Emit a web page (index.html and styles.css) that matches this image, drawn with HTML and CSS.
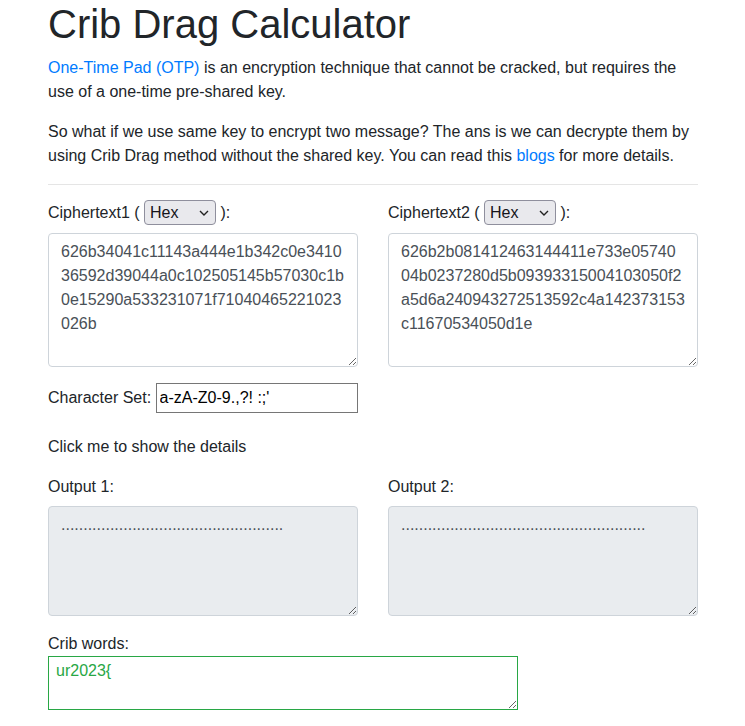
FILE: index.html
```html
<!DOCTYPE html>
<html lang="en">
<head>
<meta charset="utf-8">
<title>Crib Drag Calculator</title>
<link rel="stylesheet" href="styles.css">
</head>
<body>
<div class="container">
  <h1 class="title">Crib Drag Calculator</h1>
  <p class="lead-text"><a href="#">One-Time Pad (OTP)</a> is an encryption technique that cannot be cracked, but requires the use of a one-time pre-shared key.</p>
  <p class="lead-text">So what if we use same key to encrypt two message? The ans is we can decrypte them by using Crib Drag method without the shared key. You can read this <a href="#">blogs</a> for more details.</p>
  <hr class="divider">
  <div class="row">
    <div class="col">
      <label class="field-label">Ciphertext1 ( <span class="select-wrap"><select class="fmt-select"><option>Hex</option></select><svg class="chev" width="10" height="6" viewBox="0 0 10 6"><path d="M1 1 L5 5 L9 1" fill="none" stroke="#222" stroke-width="1.4"/></svg></span> ):</label>
      <textarea class="form-control" rows="5">626b34041c11143a444e1b342c0e3410
36592d39044a0c102505145b57030c1b
0e15290a533231071f71040465221023
026b</textarea>
    </div>
    <div class="col">
      <label class="field-label">Ciphertext2 ( <span class="select-wrap"><select class="fmt-select"><option>Hex</option></select><svg class="chev" width="10" height="6" viewBox="0 0 10 6"><path d="M1 1 L5 5 L9 1" fill="none" stroke="#222" stroke-width="1.4"/></svg></span> ):</label>
      <textarea class="form-control" rows="5">626b2b081412463144411e733e05740
04b0237280d5b09393315004103050f2
a5d6a240943272513592c4a142373153
c11670534050d1e</textarea>
    </div>
  </div>
  <div class="charset-row">
    <label class="charset-label">Character Set: <input class="charset-input" type="text" value="a-zA-Z0-9.,?! :;'"></label>
  </div>
  <p class="details-toggle">Click me to show the details</p>
  <div class="row">
    <div class="col">
      <label class="field-label output-label">Output 1:</label>
      <textarea class="form-control output" rows="4" readonly>..................................................</textarea>
    </div>
    <div class="col">
      <label class="field-label output-label">Output 2:</label>
      <textarea class="form-control output" rows="4" readonly>.......................................................</textarea>
    </div>
  </div>
  <div class="crib-group">
    <label class="crib-label">Crib words:</label>
    <textarea class="crib-input" rows="2">ur2023{</textarea>
  </div>
</div>
</body>
</html>
```
FILE: styles.css
```css
* { box-sizing: border-box; }
html, body {
  margin: 0;
  padding: 0;
  background: #fff;
}
body {
  font-family: "Liberation Sans", Arial, sans-serif;
  font-size: 16px;
  line-height: 1.5;
  color: #212529;
}
.container {
  width: 650px;
  margin-left: 48px;
}
.title {
  margin: 0 0 8px 0;
  font-size: 40px;
  font-weight: 500;
  line-height: 1.2;
}
.lead-text {
  margin: 0 0 16px 0;
}
a {
  color: #007bff;
  text-decoration: none;
}
.divider {
  margin: 15px 0 16px 0;
  border: 0;
  border-top: 1px solid rgba(0,0,0,.1);
}
.row {
  display: flex;
  gap: 30px;
  margin-bottom: 16px;
}
.col {
  flex: 1 1 0;
  display: flex;
  flex-direction: column;
}
.field-label {
  display: block;
  margin-bottom: 8px;
  line-height: 24px;
  height: 24px;
}
.output-label {
  margin-bottom: 7px;
}
.select-wrap {
  position: relative;
  display: inline-block;
  vertical-align: middle;
  margin-top: -3px;
}
.fmt-select {
  appearance: none;
  -webkit-appearance: none;
  display: block;
  width: 72px;
  height: 25px;
  padding: 0 0 0 5px;
  font-family: "Liberation Sans", Arial, sans-serif;
  font-size: 16px;
  color: #15141a;
  background: #e9e9ed;
  border: 1px solid #8f8f9d;
  border-radius: 4px;
  margin: 0;
}
.chev {
  position: absolute;
  right: 7px;
  top: 10px;
  pointer-events: none;
}
.form-control {
  display: block;
  width: 100%;
  padding: 6px 12px;
  font-family: "Liberation Sans", Arial, sans-serif;
  font-size: 16px;
  line-height: 24px;
  color: #495057;
  background: #fff;
  border: 1px solid #ced4da;
  border-radius: 4px;
  resize: vertical;
  margin: 0;
  overflow: hidden;
  white-space: pre-wrap;
  word-break: break-all;
}
.form-control.output {
  background: #e9ecef;
}
.charset-row {
  margin-bottom: 16px;
  height: 36px;
}
.charset-label {
  line-height: 30px;
}
.charset-input {
  width: 202px;
  height: 30px;
  padding: 1px 3px;
  font-family: "Liberation Sans", Arial, sans-serif;
  font-size: 16px;
  color: #000;
  border: 1px solid #767676;
  border-radius: 0;
  vertical-align: top;
  margin: 0;
}
.details-toggle {
  margin: 0 0 16px 0;
}
.crib-group {
  margin-bottom: 16px;
}
.crib-label {
  display: block;
  line-height: 24px;
}
.crib-input {
  display: block;
  width: 470px;
  height: 54px;
  padding: 2px 7px;
  font-family: "Liberation Sans", Arial, sans-serif;
  font-size: 16px;
  line-height: 24px;
  color: #28a745;
  border: 1px solid #28a745;
  border-radius: 0;
  margin: 0;
  overflow: hidden;
}
```
